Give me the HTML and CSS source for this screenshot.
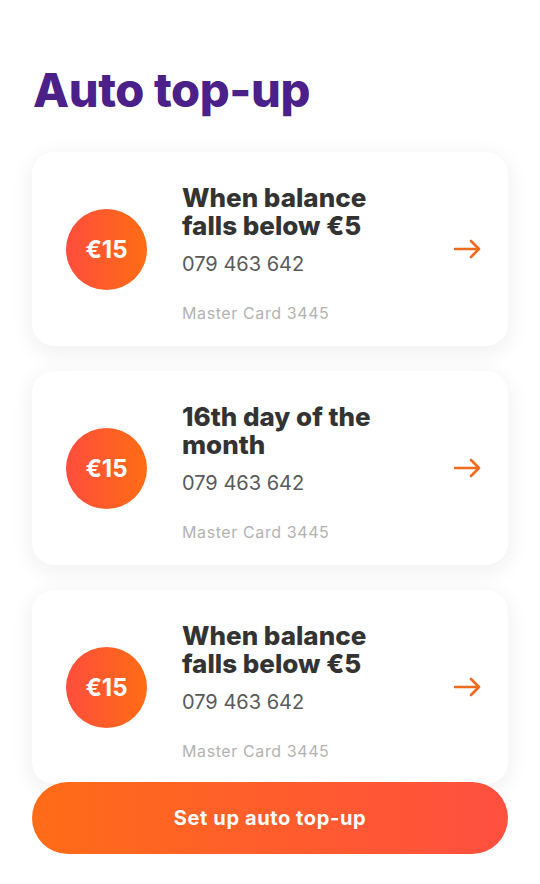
FILE: index.html
```html
<!DOCTYPE html>
<html lang="en">
<head>
  <meta charset="UTF-8">
  <meta name="viewport" content="width=device-width, initial-scale=1.0">
  <title>Auto top-up</title>
  <link rel="stylesheet" href="styles.css">
</head>
<body>
  <div class="container">
    <h1 class="title">Auto top-up</h1>

    <div class="card">
      <div class="amount">€15</div>
      <div class="info">
        <h2>When balance falls below €5</h2>
        <div class="phone">079 463 642</div>
        <div class="method">Master Card 3445</div>
      </div>
      <svg class="arrow" width="28" height="20" viewBox="0 0 28 20"><path d="M1 10h24M17 2l8 8-8 8" fill="none" stroke="#f26a1b" stroke-width="2.6" stroke-linecap="round" stroke-linejoin="round"/></svg>
    </div>

    <div class="card">
      <div class="amount">€15</div>
      <div class="info">
        <h2>16th day of the month</h2>
        <div class="phone">079 463 642</div>
        <div class="method">Master Card 3445</div>
      </div>
      <svg class="arrow" width="28" height="20" viewBox="0 0 28 20"><path d="M1 10h24M17 2l8 8-8 8" fill="none" stroke="#f26a1b" stroke-width="2.6" stroke-linecap="round" stroke-linejoin="round"/></svg>
    </div>

    <div class="card">
      <div class="amount">€15</div>
      <div class="info">
        <h2>When balance falls below €5</h2>
        <div class="phone">079 463 642</div>
        <div class="method">Master Card 3445</div>
      </div>
      <svg class="arrow" width="28" height="20" viewBox="0 0 28 20"><path d="M1 10h24M17 2l8 8-8 8" fill="none" stroke="#f26a1b" stroke-width="2.6" stroke-linecap="round" stroke-linejoin="round"/></svg>
    </div>
  </div>

  <button class="button">Set up auto top-up</button>
</body>
</html>
```

FILE: styles.css
```css
body {
  font-family: Inter, "Open Sans", sans-serif;
  background-color: #ffffff;
  margin: 0;
  padding: 0;
}
.container {
  padding: 62px 32px 0 32px;
}
.title {
  margin: 0 0 34px 1px;
  font-size: 47px;
  line-height: 56px;
  font-weight: 800;
  color: #4b2088;
  letter-spacing: -0.4px;
}
.card {
  display: flex;
  align-items: center;
  height: 194px;
  box-sizing: border-box;
  padding: 0 26px 0 34px;
  margin-bottom: 25px;
  background: white;
  border-radius: 22px;
  box-shadow: 0 5px 22px rgba(60,20,40,0.08);
}
.amount {
  flex: none;
  width: 81px;
  height: 81px;
  border-radius: 50%;
  background: linear-gradient(90deg, #ff4d3d, #ff6d14);
  color: white;
  font-weight: 700;
  font-size: 24px;
  display: flex;
  align-items: center;
  justify-content: center;
}
.info {
  flex: 1;
  margin-left: 35px;
  padding-top: 8px;
}
.info h2 {
  margin: 0;
  width: 210px;
  font-size: 26px;
  line-height: 28px;
  font-weight: 800;
  color: #333333;
}
.phone {
  margin-top: 12px;
  font-size: 20px;
  line-height: 24px;
  font-weight: 400;
  color: #5a5a5a;
}
.method {
  margin-top: 27px;
  font-size: 16px;
  line-height: 20px;
  letter-spacing: 0.6px;
  color: #b3b3b3;
}
.arrow {
  flex: none;
}
.button {
  position: fixed;
  left: 32px;
  bottom: 30px;
  width: 476px;
  height: 72px;
  border: none;
  border-radius: 36px;
  background: linear-gradient(90deg, #ff6c17, #ff4f40);
  color: white;
  font-family: Inter, "Open Sans", sans-serif;
  font-size: 20px;
  font-weight: 700;
  letter-spacing: 0.6px;
  cursor: pointer;
}
```
